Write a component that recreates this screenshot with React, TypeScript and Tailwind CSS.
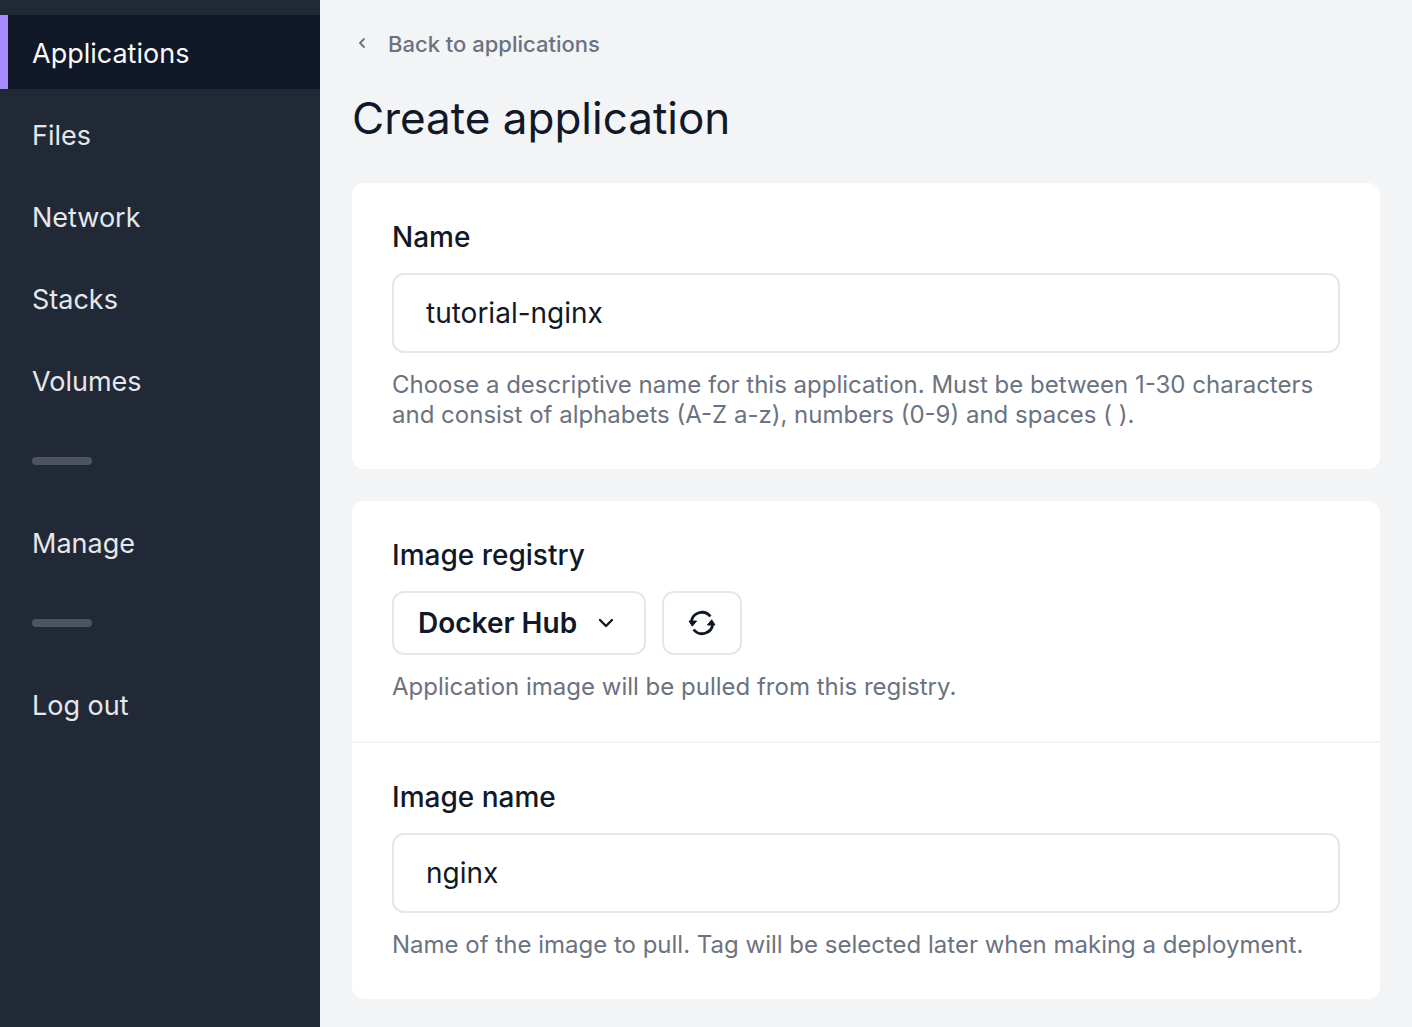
import type { ReactNode } from "react";

function NavItem({ label, active = false }: { label: string; active?: boolean }) {
  return (
    <a
      href="#"
      aria-current={active ? "page" : undefined}
      className={
        active
          ? "flex h-[74px] items-center border-l-8 border-[#a78bfa] bg-[#111827] pt-1 pl-6 text-[27px] text-[#f9fafb]"
          : "flex h-[74px] items-center border-l-8 border-transparent pt-1 pl-6 text-[27px] text-[#e5e7eb]"
      }
    >
      {label}
    </a>
  );
}

function Separator() {
  return <div role="separator" className="mx-8 my-8 h-2 w-[60px] rounded-full bg-[#4d5361]" />;
}

function Hint({ id, children }: { id: string; children: ReactNode }) {
  return (
    <p id={id} className="mt-[17px] text-[24px] leading-[30px] text-[#6b7280]">
      {children}
    </p>
  );
}

function TextField({ id, label, value, hint }: { id: string; label: string; value: string; hint: string }) {
  return (
    <div className="px-10 pt-10 pb-[39px]">
      <label htmlFor={id} className="block text-[28px] leading-7 font-medium">
        {label}
      </label>
      <input
        id={id}
        type="text"
        defaultValue={value}
        aria-describedby={`${id}-hint`}
        className="mt-[22px] h-20 w-full rounded-xl border-2 border-[#e5e7eb] bg-white px-8 text-[28px] outline-none"
      />
      <Hint id={`${id}-hint`}>{hint}</Hint>
    </div>
  );
}

export default function App() {
  return (
    <div className="flex min-h-screen bg-[#f3f4f6] font-['Inter',sans-serif] text-[#111827]">
      <nav aria-label="Main" className="flex w-80 shrink-0 flex-col gap-2 bg-[#222936] pt-[15px]">
        <NavItem label="Applications" active />
        <NavItem label="Files" />
        <NavItem label="Network" />
        <NavItem label="Stacks" />
        <NavItem label="Volumes" />
        <Separator />
        <NavItem label="Manage" />
        <Separator />
        <NavItem label="Log out" />
      </nav>
      <main className="min-w-0 flex-1 px-8 pt-7 pb-7">
        <a href="#" className="flex w-fit items-center gap-4 text-[22px] leading-8 font-medium text-[#6b7280]">
          <svg aria-hidden="true" viewBox="0 0 20 20" className="size-5" fill="none" stroke="currentColor" strokeWidth="1.800" strokeLinecap="round" strokeLinejoin="round">
            <path d="M12 5 8 9l4 4" />
          </svg>
          Back to applications
        </a>
        <h1 className="mt-7 text-[44px] leading-[60px]">Create application</h1>
        <section className="mt-[35px] rounded-xl bg-white">
          <TextField
            id="name"
            label="Name"
            value="tutorial-nginx"
            hint="Choose a descriptive name for this application. Must be between 1-30 characters and consist of alphabets (A-Z a-z), numbers (0-9) and spaces ( )."
          />
        </section>
        <section className="mt-8 rounded-xl bg-white">
          <div className="border-b-2 border-[#f3f4f6] px-10 pt-10 pb-[39px]">
            <h2 id="registry" className="text-[28px] leading-7 font-medium">
              Image registry
            </h2>
            <div className="mt-[22px] flex gap-4">
              <button
                type="button"
                aria-haspopup="listbox"
                aria-describedby="registry registry-hint"
                className="flex h-16 items-center gap-[15px] rounded-xl border-2 border-[#e5e7eb] px-6 text-[28px] font-semibold"
              >
                Docker Hub
                <svg aria-hidden="true" viewBox="0 0 28 28" className="size-7" fill="none" stroke="currentColor" strokeWidth="2.4" strokeLinecap="round" strokeLinejoin="round">
                  <path d="m8 11 6 6 6-6" />
                </svg>
              </button>
              <button
                type="button"
                aria-label="Refresh registries"
                className="flex h-16 w-20 items-center justify-center rounded-xl border-2 border-[#e5e7eb]"
              >
                <svg aria-hidden="true" viewBox="0 0 32 32" className="size-8" fill="none" stroke="currentColor" strokeWidth="2.8">
                  <path d="M5.300 15A10.700 10.700 0 0 1 24.400 9.500M26.700 17A10.700 10.700 0 0 1 7.600 22.500" />
                  <path d="M3 14h7.600l-4.300 5.200zM29 18h-7.600l4.300-5.200z" fill="currentColor" strokeWidth="1" strokeLinejoin="round" />
                </svg>
              </button>
            </div>
            <Hint id="registry-hint">Application image will be pulled from this registry.</Hint>
          </div>
          <TextField
            id="image-name"
            label="Image name"
            value="nginx"
            hint="Name of the image to pull. Tag will be selected later when making a deployment."
          />
        </section>
      </main>
    </div>
  );
}
